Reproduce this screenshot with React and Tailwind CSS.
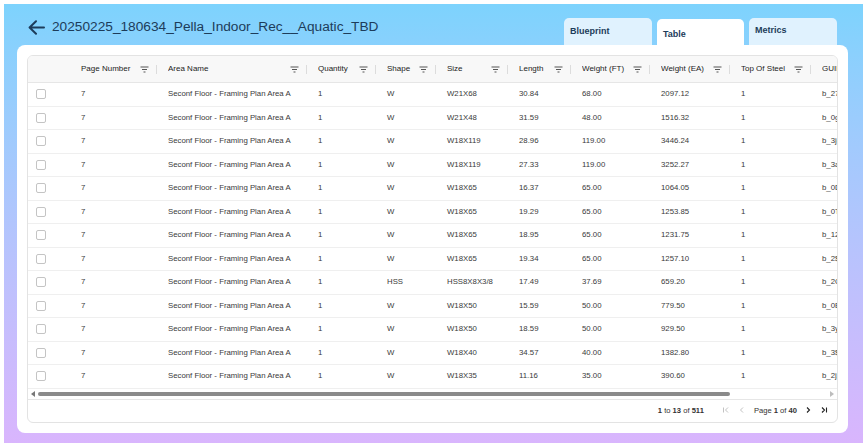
import React from 'react';

const columns = [
  { key: 'page', label: 'Page Number', width: 87 },
  { key: 'area', label: 'Area Name', width: 150 },
  { key: 'qty', label: 'Quantity', width: 69 },
  { key: 'shape', label: 'Shape', width: 60 },
  { key: 'size', label: 'Size', width: 72 },
  { key: 'length', label: 'Length', width: 63 },
  { key: 'wft', label: 'Weight (FT)', width: 79 },
  { key: 'wea', label: 'Weight (EA)', width: 80 },
  { key: 'tos', label: 'Top Of Steel', width: 81 },
  { key: 'guid', label: 'GUID', width: 120 },
];

const raw = [
  ['W', 'W21X68', '30.84', '68.00', '2097.12', 'b_27'],
  ['W', 'W21X48', '31.59', '48.00', '1516.32', 'b_0g'],
  ['W', 'W18X119', '28.96', '119.00', '3446.24', 'b_3j('],
  ['W', 'W18X119', '27.33', '119.00', '3252.27', 'b_3a'],
  ['W', 'W18X65', '16.37', '65.00', '1064.05', 'b_0D'],
  ['W', 'W18X65', '19.29', '65.00', '1253.85', 'b_0T'],
  ['W', 'W18X65', '18.95', '65.00', '1231.75', 'b_12'],
  ['W', 'W18X65', '19.34', '65.00', '1257.10', 'b_2$'],
  ['HSS', 'HSS8X8X3/8', '17.49', '37.69', '659.20', 'b_2C'],
  ['W', 'W18X50', '15.59', '50.00', '779.50', 'b_0B'],
  ['W', 'W18X50', '18.59', '50.00', '929.50', 'b_3y'],
  ['W', 'W18X40', '34.57', '40.00', '1382.80', 'b_3$'],
  ['W', 'W18X35', '11.16', '35.00', '390.60', 'b_2j2'],
];

const rows = raw.map(([shape, size, length, wft, wea, guid]) => ({
  page: '7',
  area: 'Seconf Floor - Framing Plan Area A',
  qty: '1',
  shape,
  size,
  length,
  wft,
  wea,
  tos: '1',
  guid,
}));

const FilterIcon = () => (
  <svg width="9" height="7" viewBox="0 0 9 7" className="shrink-0">
    <path d="M0.5 1h8M2 3.5h5M3.5 6h2" stroke="#555" strokeWidth="1" />
  </svg>
);

const App = () => {
  return (
    <div
      className="h-screen w-full bg-white pt-1 pl-1 pb-0.5"
      style={{ fontFamily: '"Liberation Sans", Arial, sans-serif' }}
    >
      <div className="h-full flex flex-col bg-gradient-to-b from-[#7dd3fd] to-[#d9b5fd]">
        {/* Header */}
        <div className="h-[41px] shrink-0 flex justify-between">
          <div className="flex items-center gap-[7px] pl-[24px] mt-[14px] self-start text-[#1d3c5a]">
            <svg width="17" height="15" viewBox="0 0 17 15" fill="none">
              <path d="M16 7.5H2M8 1.2L1.6 7.5 8 13.8" stroke="#1d3c5a" strokeWidth="2" strokeLinecap="round" strokeLinejoin="round" />
            </svg>
            <h1 className="text-[13.7px] leading-[18px]">20250225_180634_Pella_Indoor_Rec__Aquatic_TBD</h1>
          </div>
          <div className="flex items-end gap-[5px] mr-[26px] text-[#1d3c5a] text-[9px] font-semibold">
            <div className="w-[88px] h-[27px] bg-[#e0f2fe] rounded-t-[5px] pl-[6px] pt-[7px]">Blueprint</div>
            <div className="w-[87px] h-[26px] bg-white rounded-t-[5px] pl-[6px] pt-[9px]">Table</div>
            <div className="w-[88px] h-[27px] bg-[#e0f2fe] rounded-t-[5px] pl-[6px] pt-[6px]">Metrics</div>
          </div>
        </div>

        {/* Card */}
        <div className="flex-1 ml-[13px] mr-[15px] mb-[11px] bg-white rounded-[8px] p-[10px] flex flex-col">
          <div className="flex-1 border border-[#e3e3e3] rounded-[6px] overflow-hidden flex flex-col">
            <div className="flex-1 overflow-hidden">
              {/* Header row */}
              <div className="flex h-[27px] bg-[#f8f8f8] border-b border-[#e6e6e6] text-[8px] text-[#1c1c1c] font-medium">
                <div className="w-[42px] shrink-0" />
                {columns.map((c) => (
                  <div
                    key={c.key}
                    className="shrink-0 flex items-center pl-[11px] pr-[8px] relative"
                    style={{ width: c.width }}
                  >
                    <span className="flex-1 whitespace-nowrap overflow-hidden">{c.label}</span>
                    {c.key !== 'guid' && <FilterIcon />}
                    {c.key !== 'guid' && (
                      <span className="absolute right-0 top-[9px] h-[9px] w-px bg-[#dcdcdc]" />
                    )}
                  </div>
                ))}
              </div>
              {/* Body */}
              {rows.map((r, idx) => (
                <div key={idx} className="flex h-[23.5px] border-b border-[#efefef] text-[7.8px] text-[#3a3a3a]">
                  <div className="w-[42px] shrink-0 flex items-center pl-[8px]">
                    <span className="w-[10px] h-[10px] rounded-[2px] border border-[#c4c4c4] bg-white" />
                  </div>
                  {columns.map((c) => (
                    <div
                      key={c.key}
                      className="shrink-0 flex items-center pl-[11px] whitespace-nowrap overflow-hidden"
                      style={{ width: c.width }}
                    >
                      {r[c.key]}
                    </div>
                  ))}
                </div>
              ))}
              {/* Horizontal scrollbar */}
              <div className="h-[10px] flex items-center px-[3px]">
                <span className="w-0 h-0 border-y-[3px] border-y-transparent border-r-[4px] border-r-[#777]" />
                <div className="flex-1 pl-[3px] pr-[100px]">
                  <div className="h-[4px] bg-[#8a8a8a] rounded-full" />
                </div>
                <span className="w-0 h-0 border-y-[3px] border-y-transparent border-l-[4px] border-l-[#bdbdbd]" />
              </div>
            </div>
            {/* Footer */}
            <div className="h-[23px] shrink-0 border-t border-[#e6e6e6] flex items-center justify-end pr-[9px] text-[7.6px] text-[#333]">
              <span>
                <b>1</b> to <b>13</b> of <b>511</b>
              </span>
              <div className="flex items-center ml-[18px]">
                <svg width="8" height="8" viewBox="0 0 8 8">
                  <path d="M1.5 1.5v5M6 1.5L3.5 4 6 6.5" stroke="#c2c2c2" strokeWidth="1" fill="none" />
                </svg>
                <svg width="8" height="8" viewBox="0 0 8 8" className="ml-[8px]">
                  <path d="M5 1.5L2.5 4 5 6.5" stroke="#c2c2c2" strokeWidth="1" fill="none" />
                </svg>
                <span className="ml-[8px]">
                  Page <b>1</b> of <b>40</b>
                </span>
                <svg width="8" height="8" viewBox="0 0 8 8" className="ml-[7px]">
                  <path d="M3 1.5L5.5 4 3 6.5" stroke="#222" strokeWidth="1.1" fill="none" />
                </svg>
                <svg width="8" height="8" viewBox="0 0 8 8" className="ml-[8px]">
                  <path d="M2 1.5L4.5 4 2 6.5M6.5 1.5v5" stroke="#222" strokeWidth="1.1" fill="none" />
                </svg>
              </div>
            </div>
          </div>
        </div>
      </div>
    </div>
  );
};

export default App;
